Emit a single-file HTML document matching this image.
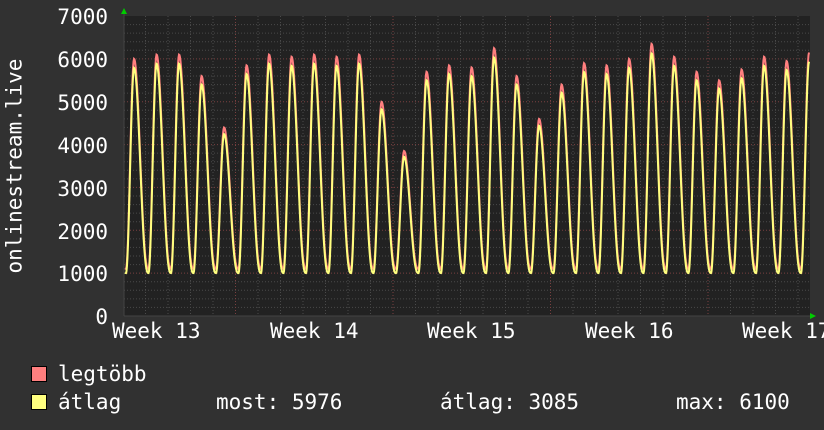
<!DOCTYPE html>
<html><head><meta charset="utf-8"><style>
html,body{margin:0;padding:0;background:#313131;}
body{width:824px;height:430px;overflow:hidden;position:relative;font-family:"DejaVu Sans Mono","Liberation Mono",monospace;color:#fff;}
.t{position:absolute;font-size:21px;line-height:21px;white-space:pre;}
.sq{position:absolute;width:14px;height:14px;border:1px solid #000;}
</style></head><body>
<svg id="g" width="824" height="430" style="position:absolute;left:0;top:0"></svg>
<div class="t" style="left:0;width:108px;text-align:right;top:7px">7000</div>
<div class="t" style="left:0;width:108px;text-align:right;top:50px">6000</div>
<div class="t" style="left:0;width:108px;text-align:right;top:93px">5000</div>
<div class="t" style="left:0;width:108px;text-align:right;top:136px">4000</div>
<div class="t" style="left:0;width:108px;text-align:right;top:179px">3000</div>
<div class="t" style="left:0;width:108px;text-align:right;top:222px">2000</div>
<div class="t" style="left:0;width:108px;text-align:right;top:264px">1000</div>
<div class="t" style="left:0;width:108px;text-align:right;top:307px">0</div>
<div class="t" style="left:-80px;top:168px;width:190px;text-align:center;transform:rotate(-90deg)">onlinestream.live</div>
<div class="t" style="left:112px;top:321px">Week 13</div>
<div class="t" style="left:270px;top:321px">Week 14</div>
<div class="t" style="left:427px;top:321px">Week 15</div>
<div class="t" style="left:585px;top:321px">Week 16</div>
<div class="t" style="left:742px;top:321px">Week 17</div>
<div class="sq" style="left:31px;top:366px;background:#ff7f7f"></div>
<div class="sq" style="left:31px;top:394px;background:#ffff7f"></div>
<div class="t" style="left:58px;top:364px">legtöbb</div>
<div class="t" style="left:58px;top:392px">átlag</div>
<div class="t" style="left:216px;top:392px">most: 5976</div>
<div class="t" style="left:440px;top:392px">átlag: 3085</div>
<div class="t" style="left:676px;top:392px">max: 6100</div>
<script>
var s='',L=124,R=810,T=16,B=316;
function Y(v){return B-v*300/7000;}
s+='<rect x="'+L+'" y="'+T+'" width="'+(R-L)+'" height="'+(B-T)+'" fill="#222"/>';
for(var v=200;v<7000;v+=200){var y=Y(v).toFixed(1);var maj=v%1000==0;s+='<line x1="'+L+'" x2="'+R+'" y1="'+y+'" y2="'+y+'" stroke="'+(maj?'#7a4040':'#4a4a4a')+'" stroke-dasharray="1,2"/>';}
for(var x=235.5-5*22.5;x<R;x+=22.5){if(x<L)continue;var k=Math.round((x-235.5)/22.5);var maj=((k%7)+7)%7==0;s+='<line x1="'+x+'" x2="'+x+'" y1="'+T+'" y2="'+B+'" stroke="'+(maj?'#7a4040':'#4a4a4a')+'" stroke-dasharray="1,2"/>';}
var pk=[6000,6100,6100,5600,4400,5850,6100,6050,6100,6050,6100,5000,3850,5700,5850,5800,6250,5600,4600,5400,5900,5850,6000,6350,6050,5700,5500,5750,6050,5950,6150];
function val(x,red){var t=(x-126)/22.5;var i=Math.floor(t);var p=t-i;if(i<0){i=0;}var P=pk[Math.min(i,pk.length-1)];var mn=red?1100:1000;var pv=red?P:P*0.965;var f;if(p<0.36){var q=p/0.36;f=(1-Math.cos(Math.PI*q))/2;}else{var q=(p-0.36)/0.64;f=(1+Math.cos(Math.PI*q))/2;f=Math.pow(f,1.3);}
return mn+(pv-mn)*f;}
function poly(red,c){var pts=[];for(var x=L+1;x<=R-1;x+=0.5)pts.push(x+','+Y(val(x,red)).toFixed(1));return '<polyline points="'+pts.join(' ')+'" fill="none" stroke="'+c+'" stroke-width="2"/>';}
s+=poly(true,'#ff7f7f');s+=poly(false,'#ffff7f');
s+='<line x1="'+L+'" x2="'+(R+2)+'" y1="'+B+'" y2="'+B+'" stroke="#444"/>';
s+='<line x1="'+L+'" x2="'+L+'" y1="'+(T-4)+'" y2="'+B+'" stroke="#444"/>';
s+='<polygon points="121,14 127,14 124,8" fill="#00cc00"/>';
s+='<polygon points="810,313 810,319 816,316" fill="#00cc00"/>';
document.getElementById('g').innerHTML=s;
</script>
</body></html>
